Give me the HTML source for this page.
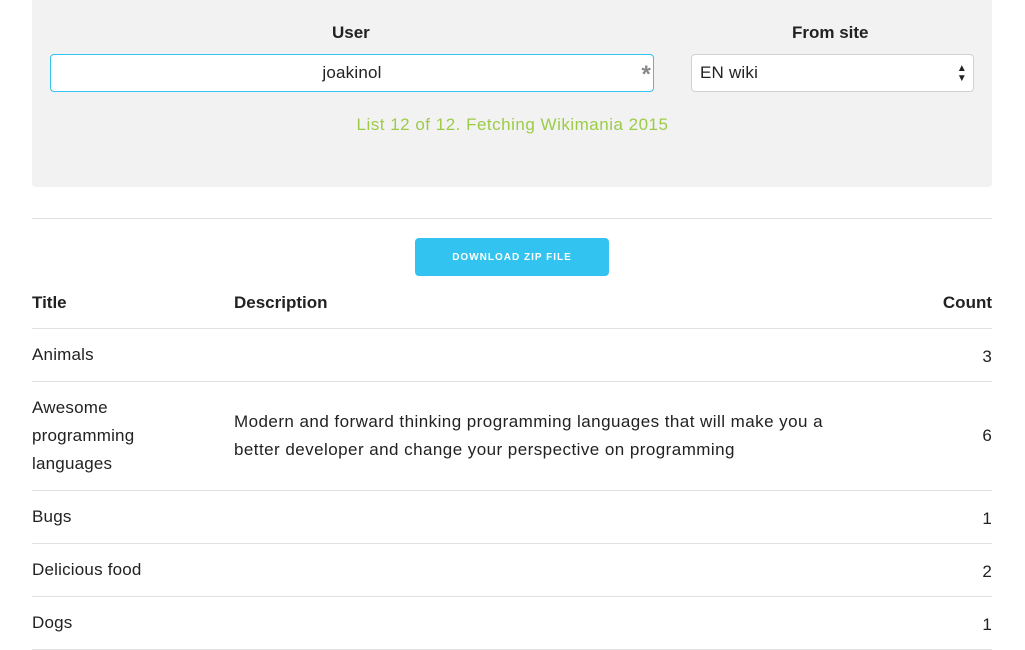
<!DOCTYPE html>
<html><head><meta charset="utf-8"><style>
*{box-sizing:border-box;margin:0;padding:0}
body{width:1025px;height:650px;overflow:hidden;background:#fff;font-family:"Liberation Sans",sans-serif;color:#222;position:relative;letter-spacing:0.2px}
.panel{position:absolute;left:32px;top:0;width:960px;height:187px;background:#f2f2f2;border-radius:0 0 4px 4px}
.lbl{position:absolute;font-weight:bold;font-size:17px;color:#222;letter-spacing:0}
.inp{position:absolute;left:50px;top:54px;width:604px;height:38px;background:#fff;border:1px solid #33c3f0;border-radius:4px;text-align:center;line-height:36px;font-size:17px}
.star{position:absolute;right:2px;top:2px;color:#888;font-size:24px;font-weight:bold}
.sel{position:absolute;left:691px;top:54px;width:283px;height:38px;background:#fff;border:1px solid #d1d1d1;border-radius:4px;line-height:36px;font-size:17px;padding-left:8px}
.arr{position:absolute;right:6px;top:9px;font-size:10px;line-height:10px;color:#222}
.msg{position:absolute;left:0;width:1025px;top:115px;text-align:center;color:#9ccc47;font-size:17px;letter-spacing:0.5px}
.hr{position:absolute;left:32px;width:960px;top:218px;border-top:1px solid #e1e1e1}
.btn{position:absolute;left:415px;top:238px;width:194px;height:38px;background:#33c3f0;border-radius:4px;color:#fff;font-size:10px;font-weight:bold;letter-spacing:1px;text-align:center;line-height:40px}
.row{position:absolute;left:32px;width:960px;border-bottom:1px solid #e1e1e1;font-size:17px}
.c1{position:absolute;left:0}.c2{position:absolute;left:202px;letter-spacing:0.45px}.c3{position:absolute;right:0}
</style></head><body>
<div class="panel"></div>
<div class="lbl" style="left:332px;top:23px">User</div>
<div class="lbl" style="left:792px;top:23px">From site</div>
<div class="inp">joakinol<span class="star">*</span></div>
<div class="sel">EN wiki<div class="arr">▲<br>▼</div></div>
<div class="msg">List 12 of 12. Fetching Wikimania 2015</div>
<div class="hr"></div>
<div class="btn">DOWNLOAD ZIP FILE</div>
<div class="row" style="top:282px;height:47px;font-weight:bold;letter-spacing:0"><span class="c1" style="top:11px">Title</span><span class="c2" style="top:11px;letter-spacing:0">Description</span><span class="c3" style="top:11px">Count</span></div>
<div class="row" style="top:329px;height:53px"><span class="c1" style="top:16px">Animals</span><span class="c3" style="top:18px">3</span></div>
<div class="row" style="top:382px;height:109px;line-height:28px"><span class="c1" style="top:12px">Awesome<br>programming<br>languages</span><span class="c2" style="top:26px">Modern and forward thinking programming languages that will make you a<br>better developer and change your perspective on programming</span><span class="c3" style="top:40px">6</span></div>
<div class="row" style="top:491px;height:53px"><span class="c1" style="top:16px">Bugs</span><span class="c3" style="top:18px">1</span></div>
<div class="row" style="top:544px;height:53px"><span class="c1" style="top:16px">Delicious food</span><span class="c3" style="top:18px">2</span></div>
<div class="row" style="top:597px;height:53px"><span class="c1" style="top:16px">Dogs</span><span class="c3" style="top:18px">1</span></div>
</body></html>
